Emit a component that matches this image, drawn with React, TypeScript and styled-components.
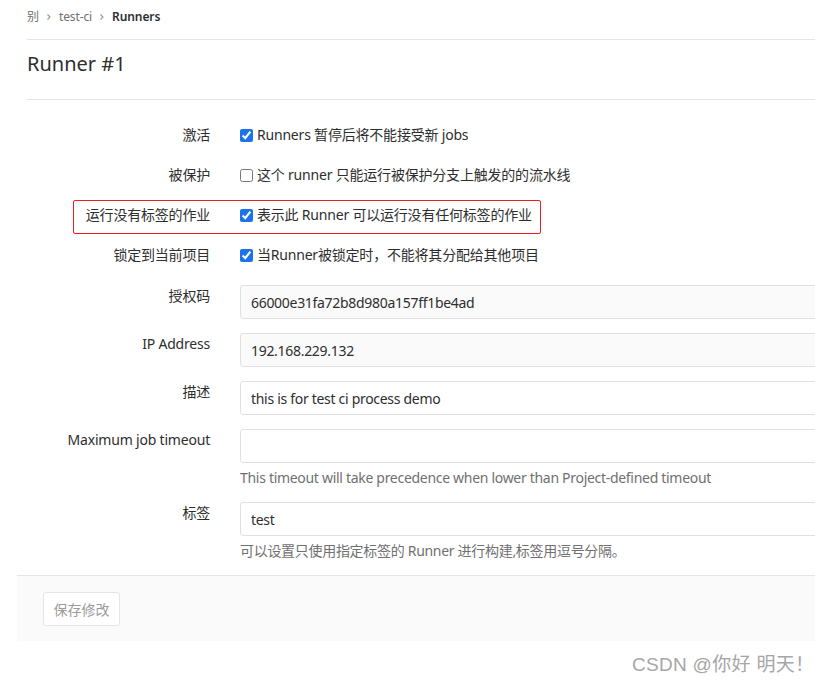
import styled, { createGlobalStyle } from "styled-components";

const GlobalStyle = createGlobalStyle`
  html, body {
    margin: 0;
    padding: 0;
    overflow: hidden;
    background: #fff;
  }
  body {
    font-family: "Noto Sans", "Noto Sans CJK SC", sans-serif;
    font-size: 14px;
    letter-spacing: -0.2px;
    color: #2e2e2e;
  }
`;

const Chevron = () => (
  <svg width="8" height="8" viewBox="0 0 8 8">
    <path d="M2.5 1.5 L5 4 L2.5 6.5" fill="none" stroke="#999" strokeWidth="1.1" />
  </svg>
);

interface ICheckRow {
  label: string;
  text: string;
  checked: boolean;
  highlight?: boolean;
}

const CheckRow = ({ label, text, checked, highlight }: ICheckRow) => (
  <CheckRowWrapper>
    {highlight && <Highlight />}
    <Label>{label}</Label>
    <CheckLabel>
      <input type="checkbox" defaultChecked={checked} />
      {text}
    </CheckLabel>
  </CheckRowWrapper>
);

interface IInputRow {
  label: string;
  value: string;
  readOnly?: boolean;
  help?: string;
}

const InputRow = ({ label, value, readOnly, help }: IInputRow) => (
  <InputRowWrapper>
    <InputLabel>{label}</InputLabel>
    <Field>
      <TextInput defaultValue={value} readOnly={readOnly} $readOnly={!!readOnly} />
      {help && <Help>{help}</Help>}
    </Field>
  </InputRowWrapper>
);

const App = () => {
  return (
    <Page>
      <GlobalStyle />
      <Breadcrumb>
        <Crumb>别</Crumb>
        <Chevron />
        <Crumb>test-ci</Crumb>
        <Chevron />
        <Crumb $active>Runners</Crumb>
      </Breadcrumb>
      <TitleBar>
        <Title>Runner #1</Title>
      </TitleBar>
      <Form>
        <CheckRow label="激活" text="Runners 暂停后将不能接受新 jobs" checked />
        <CheckRow label="被保护" text="这个 runner 只能运行被保护分支上触发的的流水线" checked={false} />
        <CheckRow label="运行没有标签的作业" text="表示此 Runner 可以运行没有任何标签的作业" checked highlight />
        <CheckRow label="锁定到当前项目" text="当Runner被锁定时，不能将其分配给其他项目" checked />
        <Inputs>
          <InputRow label="授权码" value="66000e31fa72b8d980a157ff1be4ad" readOnly />
          <InputRow label="IP Address" value="192.168.229.132" readOnly />
          <InputRow label="描述" value="this is for test ci process demo" />
          <InputRow
            label="Maximum job timeout"
            value=""
            help="This timeout will take precedence when lower than Project-defined timeout"
          />
          <InputRow label="标签" value="test" help="可以设置只使用指定标签的 Runner 进行构建,标签用逗号分隔。" />
        </Inputs>
      </Form>
      <Actions>
        <SaveButton disabled>保存修改</SaveButton>
      </Actions>
      <Watermark>CSDN @你好 明天！</Watermark>
    </Page>
  );
};

const Page = styled.div`
  position: relative;
  width: 900px;
  height: 684px;
  padding: 0 0 0 27px;
  box-sizing: border-box;
`;

const Breadcrumb = styled.div`
  display: flex;
  align-items: center;
  gap: 6px;
  height: 32px;
  padding-bottom: 6px;
  padding-top: 1px;
  border-bottom: 1px solid #e5e5e5;
`;

const Crumb = styled.span<{ $active?: boolean }>`
  font-size: 12px;
  line-height: 20px;
  letter-spacing: -0.1px;
  color: ${(p) => (p.$active ? "#2e2e2e" : "#707070")};
  font-weight: ${(p) => (p.$active ? 600 : 400)};
`;

const TitleBar = styled.div`
  padding: 10px 0 21px;
  border-bottom: 1px solid #e5e5e5;
`;

const Title = styled.h3`
  margin: 0;
  font-size: 20px;
  line-height: 28px;
  font-weight: 400;
  letter-spacing: 0;
  color: #2e2e2e;
`;

const Form = styled.div`
  padding-top: 15px;
`;

const CheckRowWrapper = styled.div`
  position: relative;
  display: grid;
  grid-template-columns: 183px 1fr;
  column-gap: 30px;
  align-items: center;
  height: 40px;
`;

const Highlight = styled.div`
  position: absolute;
  left: 46px;
  top: 5px;
  width: 468px;
  height: 34px;
  box-sizing: border-box;
  border: 1px solid #ee1c1c;
  border-radius: 2px;
  pointer-events: none;
`;

const Label = styled.div`
  text-align: right;
  line-height: 20px;
  white-space: nowrap;
`;

const CheckLabel = styled.label`
  display: flex;
  align-items: center;
  line-height: 20px;
  white-space: nowrap;
  input {
    margin: 0 4px 0 0;
    width: 13px;
    height: 13px;
    accent-color: #1a73e8;
  }
`;

const Inputs = styled.div`
  padding-top: 10px;
  display: flex;
  flex-direction: column;
  gap: 14px;
`;

const InputRowWrapper = styled.div`
  display: grid;
  grid-template-columns: 183px 1fr;
  column-gap: 30px;
  align-items: start;
`;

const InputLabel = styled(Label)`
  padding-top: 1px;
`;

const Field = styled.div`
  display: flex;
  flex-direction: column;
`;

const TextInput = styled.input<{ $readOnly: boolean }>`
  height: 34px;
  box-sizing: border-box;
  border: 1px solid #e0e0e0;
  border-radius: 3px;
  background: ${(p) => (p.$readOnly ? "#fafafa" : "#fff")};
  padding: 0 10px;
  font-family: "Noto Sans", "Noto Sans CJK SC", sans-serif;
  font-size: 14px;
  letter-spacing: -0.3px;
  color: #2e2e2e;
  outline: none;
`;

const Help = styled.div`
  margin-top: 5px;
  line-height: 20px;
  color: #707070;
  font-size: 14px;
  letter-spacing: -0.3px;
  white-space: nowrap;
`;

const Actions = styled.div`
  margin: 14px 0 0 -10px;
  height: 66px;
  box-sizing: border-box;
  padding: 16px 26px;
  background: #fafafa;
  border-top: 1px solid #e5e5e5;
`;

const SaveButton = styled.button`
  width: 77px;
  height: 34px;
  background: #fff;
  border: 1px solid #e5e5e5;
  border-radius: 3px;
  font-family: "Noto Sans", "Noto Sans CJK SC", sans-serif;
  font-size: 14px;
  color: #9a9a9a;
  padding: 0 0 1px;
`;

const Watermark = styled.div`
  position: absolute;
  left: 632px;
  top: 652px;
  font-family: "Liberation Sans", "Noto Sans CJK SC", sans-serif;
  font-size: 19px;
  line-height: 26px;
  letter-spacing: 0.3px;
  color: #a6a6a6;
  white-space: nowrap;
`;

export default App;
